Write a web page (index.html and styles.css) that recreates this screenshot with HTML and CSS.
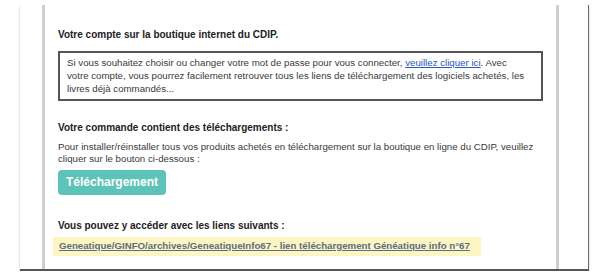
FILE: index.html
```html
<!DOCTYPE html>
<html lang="fr">
<head>
    <meta charset="UTF-8">
    <title>Votre commande CDIP</title>
    <link rel="stylesheet" href="styles.css">
</head>
<body>
    <div class="frame">
        <div class="column">
            <h2 class="title first">Votre compte sur la boutique internet du CDIP.</h2>

            <div class="account-box">
                Si vous souhaitez choisir ou changer votre mot de passe pour vous connecter, <a href="#" class="link">veuillez cliquer ici</a>. Avec<br>
                votre compte, vous pourrez facilement retrouver tous les liens de téléchargement des logiciels achetés, les livres déjà commandés...
            </div>

            <h2 class="title">Votre commande contient des téléchargements :</h2>
            <p class="text">Pour installer/réinstaller tous vos produits achetés en téléchargement sur la boutique en ligne du CDIP, veuillez cliquer sur le bouton ci-dessous :</p>

            <a href="#" class="btn">Téléchargement</a>

            <h2 class="title links-title">Vous pouvez y accéder avec les liens suivants :</h2>
            <div class="downloads">
                <a href="#" class="dl-link">Geneatique/GINFO/archives/GeneatiqueInfo67 - lien téléchargement Généatique info n°67</a>
            </div>
        </div>
    </div>
</body>
</html>
```

FILE: styles.css
```css
* {
    margin: 0;
    padding: 0;
    box-sizing: border-box;
}

body {
    background: #fff;
    font-family: 'Liberation Sans', Arial, sans-serif;
    color: #333;
    font-size: 9.7px;
}

.frame {
    margin: 5px 0 0 20px;
    width: 569px;
    height: 266px;
    padding: 0 29px 0 22px;
    border-right: 1px solid #6a6a6a;
    border-bottom: 2px solid #555;
    box-shadow: 0 1px 2px rgba(0, 0, 0, 0.25);
}

.column {
    height: 100%;
    border-left: 3px solid #cfcfcf;
    border-right: 3px solid #cfcfcf;
    padding: 24px 13px 0 13px;
}

.title {
    font-size: 10px;
    font-weight: bold;
    color: #222;
    line-height: 12px;
    margin-top: 21px;
}

.title.first {
    margin-top: 0;
}

.title.links-title {
    margin-top: 25px;
}

.account-box {
    margin-top: 10px;
    border: 2px solid #555;
    padding: 3px 4px 4px 7px;
    line-height: 13px;
    color: #3a3a3a;
}

.link {
    color: #2a56c6;
}

.text {
    margin-top: 7px;
    line-height: 12px;
    color: #3a3a3a;
}

.btn {
    display: block;
    width: fit-content;
    margin-top: 5px;
    padding: 0 8px;
    height: 25px;
    line-height: 25px;
    background: #5cc3b8;
    color: #fff;
    font-size: 12px;
    font-weight: bold;
    text-decoration: none;
    border-radius: 4px;
}

.downloads {
    margin-top: 5px;
    margin-left: -5px;
    width: fit-content;
    background: #fdf6c3;
    padding: 3px 11px 4px 6px;
    line-height: 12px;
}

.dl-link {
    color: #5b6c86;
    font-weight: bold;
}
```
